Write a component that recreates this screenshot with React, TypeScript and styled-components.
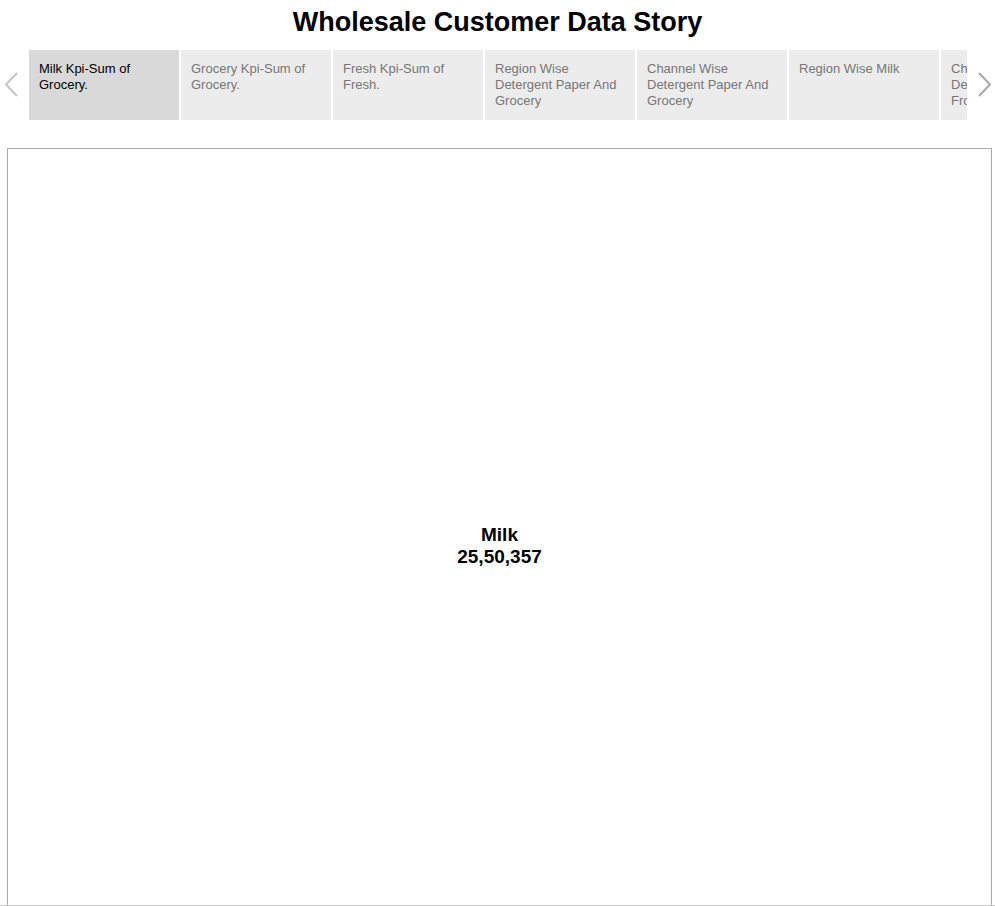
import React from 'react';
import styled, { createGlobalStyle } from 'styled-components';

const GlobalStyle = createGlobalStyle`
  html, body {
    margin: 0;
    padding: 0;
    background: #ffffff;
    font-family: "Liberation Sans", Arial, sans-serif;
  }
`;

const stories = [
  'Milk Kpi-Sum of Grocery.',
  'Grocery Kpi-Sum of Grocery.',
  'Fresh Kpi-Sum of Fresh.',
  'Region Wise Detergent Paper And Grocery',
  'Channel Wise Detergent Paper And Grocery',
  'Region Wise Milk',
  'Channel Wise Detergent Paper And Frozen',
];

function Chevron({ dir }: { dir: 'left' | 'right' }) {
  const d = dir === 'left' ? 'M13 1 L2 12.5 L13 24' : 'M2 1 L13 12.5 L2 24';
  return (
    <svg width="15" height="26" viewBox="0 0 15 26">
      <path d={d} fill="none" stroke="currentColor" strokeWidth="2" />
    </svg>
  );
}

function App() {
  return (
    <Page>
      <GlobalStyle />
      <Title>Wholesale Customer Data Story</Title>
      <Navigator>
        <Arrow $side="left">
          <Chevron dir="left" />
        </Arrow>
        <TabViewport>
          {stories.map((s, i) => (
            <Tab key={s} $active={i === 0}>{s}</Tab>
          ))}
        </TabViewport>
        <Arrow $side="right">
          <Chevron dir="right" />
        </Arrow>
      </Navigator>
      <StoryPoint>
        <Kpi>
          <div>Milk</div>
          <div>25,50,357</div>
        </Kpi>
      </StoryPoint>
    </Page>
  );
}

const Page = styled.div`
  height: 100vh;
  box-sizing: border-box;
  overflow: hidden;
  border-bottom: 1px solid #c8c8c8;
`;

const Title = styled.h1`
  margin: 0;
  padding-top: 7px;
  height: 43px;
  line-height: 30px;
  font-size: 27px;
  font-weight: bold;
  text-align: center;
  color: #000;
`;

const Navigator = styled.div`
  display: flex;
  height: 70px;
`;

const Arrow = styled.div<{ $side: 'left' | 'right' }>`
  width: ${(p) => (p.$side === 'left' ? '29px' : '28px')};
  display: flex;
  align-items: center;
  justify-content: ${(p) => (p.$side === 'left' ? 'flex-start' : 'flex-end')};
  padding: ${(p) => (p.$side === 'left' ? '0 0 0 4px' : '0 3px 0 0')};
  box-sizing: border-box;
  color: ${(p) => (p.$side === 'left' ? '#c4c4c4' : '#a8a8a8')};
`;

const TabViewport = styled.div`
  width: 938px;
  display: flex;
  gap: 2px;
  overflow: hidden;
`;

const Tab = styled.div<{ $active: boolean }>`
  flex: 0 0 150px;
  box-sizing: border-box;
  padding: 11px 10px 0 10px;
  font-size: 13px;
  line-height: 16px;
  background: ${(p) => (p.$active ? '#d9d9d9' : '#ececec')};
  color: ${(p) => (p.$active ? '#000000' : '#767676')};
`;

const StoryPoint = styled.div`
  margin: 28px 0 0 7px;
  width: 985px;
  height: 796px;
  box-sizing: border-box;
  border: 1px solid #ababab;
  display: flex;
  align-items: center;
  justify-content: center;
`;

const Kpi = styled.div`
  text-align: center;
  font-size: 19px;
  line-height: 22px;
  font-weight: bold;
  color: #000;
`;

export default App;
